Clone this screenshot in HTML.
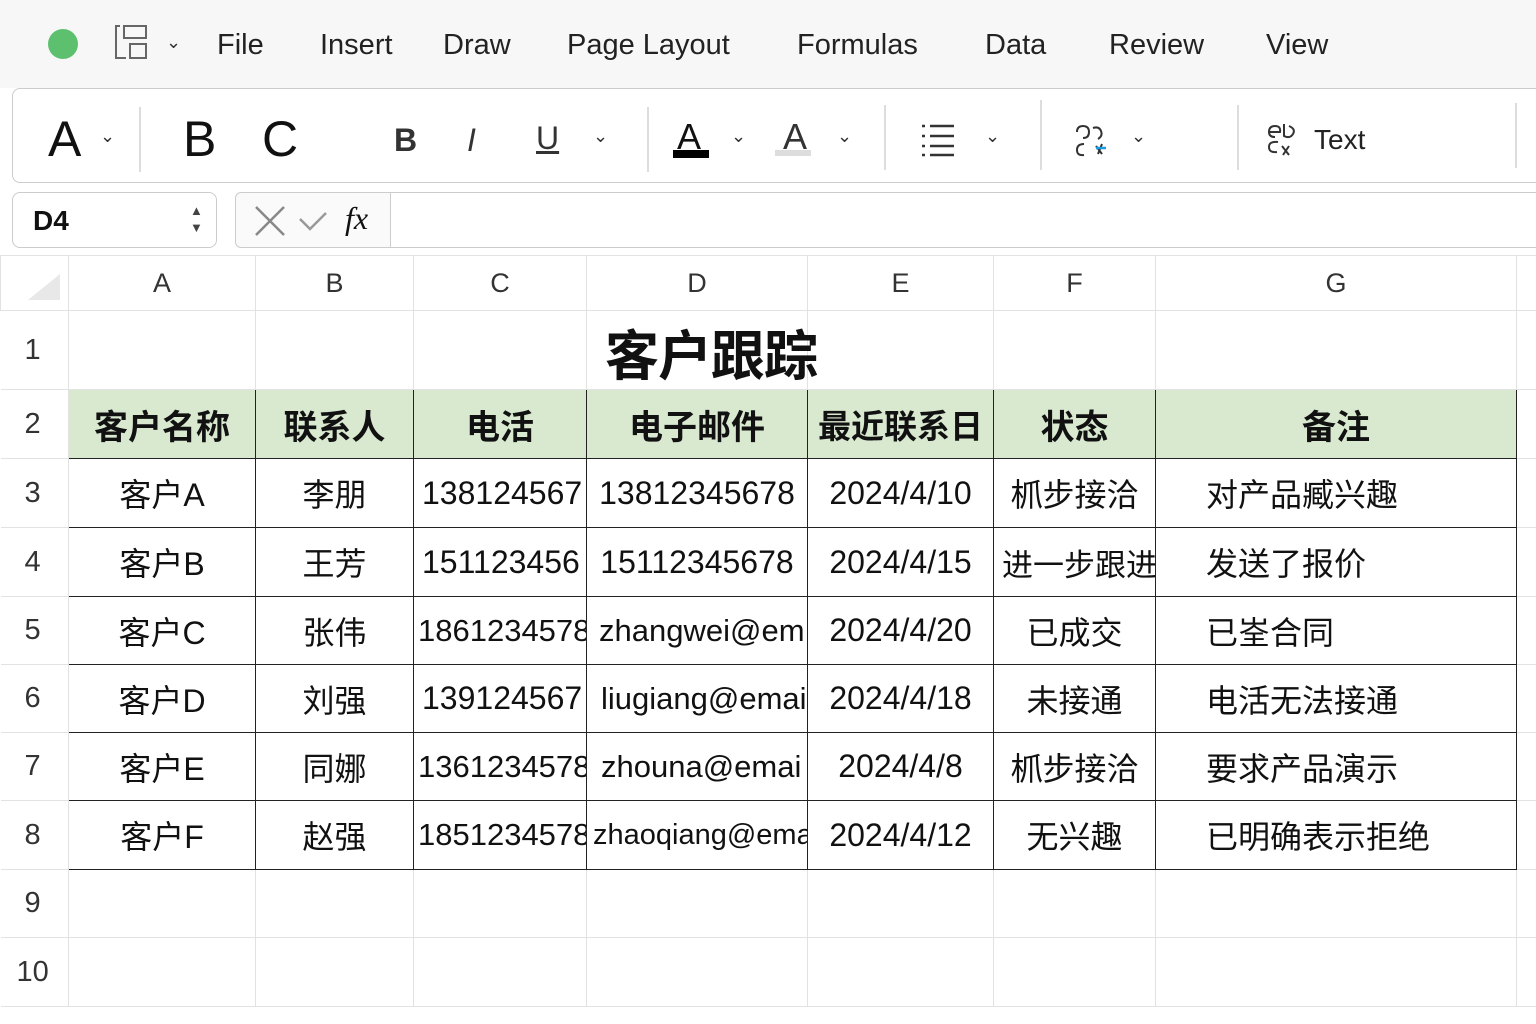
<!DOCTYPE html>
<html><head><meta charset="utf-8"><style>
*{margin:0;padding:0;box-sizing:border-box}
body{width:1536px;height:1024px;background:#fff;position:relative;overflow:hidden;font-family:"Liberation Sans","Noto Sans CJK SC",sans-serif;color:#111}
.a{position:absolute}
.menu{font-size:29px;color:#222;top:29px}
.tb{left:12px;top:88px;width:1540px;height:95px;border:1.5px solid #ccc;border-radius:8px;background:#fff}
.chev{font-size:18px;color:#333}
.sep{width:1.5px;background:#ddd}
table{position:absolute;left:0;top:255px;width:1536px;border-collapse:collapse;table-layout:fixed}
td{border:1px solid #e2e2e2;text-align:center;font-size:32px;white-space:nowrap;overflow:hidden;padding:0}
.ch td{font-size:27px;color:#333;background:#fff}
td.rh{font-size:29px;color:#333;text-align:left;padding-left:24px;border-left:none}
.d td:not(.rh):not(.e){border:1.5px solid #222}
.h td:not(.rh):not(.e){background:#d8e9d0;font-weight:bold;border:1.5px solid #222;font-size:34px}
.l{text-align:left!important}
</style></head><body>
<div class="a" style="left:0;top:0;width:1536px;height:88px;background:#f7f7f7"></div>
<div class="a" style="left:48px;top:29px;width:30px;height:30px;border-radius:50%;background:#5cc06e"></div>
<svg class="a" style="left:112px;top:24px" width="40" height="38" viewBox="0 0 40 38"><path d="M8 2h-4v32h10M12 2h22v12h-22z M18 20h16v14h-16z" fill="none" stroke="#666" stroke-width="2"/></svg>
<div class="a chev" style="left:166px;top:32px">⌄</div>
<div class="a menu" style="left:217px">File</div>
<div class="a menu" style="left:320px">Insert</div>
<div class="a menu" style="left:443px">Draw</div>
<div class="a menu" style="left:567px">Page Layout</div>
<div class="a menu" style="left:797px">Formulas</div>
<div class="a menu" style="left:985px">Data</div>
<div class="a menu" style="left:1109px">Review</div>
<div class="a menu" style="left:1266px">View</div>
<div class="a tb"></div>
<div class="a" style="left:48px;top:110px;font-size:50px;font-weight:300">A</div>
<div class="a chev" style="left:100px;top:126px">⌄</div>
<div class="a sep" style="left:139px;top:107px;height:65px"></div>
<div class="a" style="left:183px;top:110px;font-size:50px">B</div>
<div class="a" style="left:262px;top:110px;font-size:50px">C</div>
<div class="a" style="left:394px;top:122px;font-size:32px;font-weight:bold;color:#333">B</div>
<div class="a" style="left:467px;top:122px;font-size:32px;font-style:italic;color:#333">I</div>
<div class="a" style="left:536px;top:120px;font-size:32px;color:#333;text-decoration:underline">U</div>
<div class="a chev" style="left:593px;top:126px">⌄</div>
<div class="a sep" style="left:647px;top:107px;height:65px"></div>
<div class="a" style="left:677px;top:116px;font-size:36px">A</div>
<div class="a" style="left:673px;top:150px;width:36px;height:8px;background:#000"></div>
<div class="a chev" style="left:731px;top:126px">⌄</div>
<div class="a" style="left:783px;top:116px;font-size:36px;color:#333">A</div>
<div class="a" style="left:775px;top:150px;width:36px;height:6px;background:#ddd"></div>
<div class="a chev" style="left:837px;top:126px">⌄</div>
<div class="a sep" style="left:884px;top:105px;height:65px"></div>
<svg class="a" style="left:920px;top:122px" width="36" height="36"><g stroke="#333" stroke-width="2.5"><path d="M10 4h24M10 14h24M10 24h24M10 33h24"/><path d="M2 4h3M2 14h3M2 24h3M2 33h3"/></g></svg>
<div class="a chev" style="left:985px;top:126px">⌄</div>
<div class="a sep" style="left:1040px;top:100px;height:70px"></div>
<svg class="a" style="left:1074px;top:124px" width="36" height="34"><path d="M3 8q0-6 6-6t6 6-6 6M19 4q6-2 8 3t-3 8M10 20q-7 0-7 6t7 5M22 22l6 8M28 20l-4 10" fill="none" stroke="#333" stroke-width="2"/><path d="M22 24h10" stroke="#1a9de0" stroke-width="2.5"/></svg>
<div class="a chev" style="left:1131px;top:126px">⌄</div>
<div class="a sep" style="left:1237px;top:105px;height:65px"></div>
<svg class="a" style="left:1266px;top:124px" width="32" height="32"><path d="M3 8q0-6 6-6t5 6h-11q0 5 6 5M18 0v12q6 3 9-2t-4-8" fill="none" stroke="#333" stroke-width="2"/><path d="M12 18q-9-1-9 5t8 5M16 22l7 9M23 22l-6 9" fill="none" stroke="#333" stroke-width="2"/></svg>
<div class="a" style="left:1314px;top:124px;font-size:28px;color:#222">Text</div>
<div class="a sep" style="left:1515px;top:103px;height:65px"></div>
<div class="a" style="left:12px;top:192px;width:205px;height:56px;border:1.5px solid #ccc;border-radius:8px"></div>
<div class="a" style="left:33px;top:205px;font-size:28px;font-weight:bold">D4</div>
<div class="a" style="left:190px;top:202px;font-size:13px;line-height:17px;color:#444">▲<br>▼</div>
<div class="a" style="left:235px;top:192px;width:156px;height:56px;border:1.5px solid #ccc;border-radius:6px 0 0 6px;background:#fafafa"></div>
<svg class="a" style="left:254px;top:205px" width="80" height="32"><path d="M2 2l28 28M30 2l-28 28" stroke="#888" stroke-width="2.5"/><path d="M46 14l10 10 16-16" stroke="#999" stroke-width="2.5" fill="none"/></svg>
<div class="a" style="left:345px;top:200px;font-size:32px;font-style:italic;font-family:'Liberation Serif',serif">fx</div>
<div class="a" style="left:391px;top:192px;width:1150px;height:56px;border-top:1.5px solid #ccc;border-bottom:1.5px solid #ccc"></div>
<table>
<colgroup><col style="width:68px"><col style="width:187px"><col style="width:158px"><col style="width:173px"><col style="width:221px"><col style="width:186px"><col style="width:162px"><col style="width:361px"><col style="width:20px"></colgroup>
<tr class="ch" style="height:55px"><td style="position:relative"><svg width="36" height="30" style="position:absolute;left:25px;top:16px"><path d="M34 2v26h-32z" fill="#e8e8e8"/></svg></td><td>A</td><td>B</td><td>C</td><td>D</td><td>E</td><td>F</td><td>G</td><td></td></tr>
<tr style="height:79px"><td class="rh">1</td><td></td><td></td><td></td><td></td><td></td><td></td><td></td><td></td></tr>
<tr class="h" style="height:69px"><td class="rh">2</td><td>客户名称</td><td>联系人</td><td>电活</td><td>电子邮件</td><td style="font-size:33px">最近联系日</td><td>状态</td><td>备注</td><td class="e"></td></tr>
<tr class="d" style="height:69px"><td class="rh">3</td><td>客户A</td><td>李朋</td><td class="l" style="padding-left:8px">138124567</td><td>13812345678</td><td>2024/4/10</td><td>枛步接洽</td><td class="l" style="padding-left:50px">对产品臧兴趣</td><td class="e"></td></tr>
<tr class="d" style="height:69px"><td class="rh">4</td><td>客户B</td><td>王芳</td><td class="l" style="padding-left:8px">151123456</td><td>15112345678</td><td>2024/4/15</td><td class="l" style="padding-left:8px;font-size:31px">进一步跟进</td><td class="l" style="padding-left:50px">发送了报价</td><td class="e"></td></tr>
<tr class="d" style="height:68px"><td class="rh">5</td><td>客户C</td><td>张伟</td><td class="l" style="padding-left:4px;font-size:31px">1861234578</td><td class="l" style="padding-left:12px;font-size:31px">zhangwei@em</td><td>2024/4/20</td><td>已成交</td><td class="l" style="padding-left:50px">已峑合同</td><td class="e"></td></tr>
<tr class="d" style="height:68px"><td class="rh">6</td><td>客户D</td><td>刘强</td><td class="l" style="padding-left:8px">139124567</td><td class="l" style="padding-left:14px;font-size:31px">liugiang@emai</td><td>2024/4/18</td><td>未接通</td><td class="l" style="padding-left:50px">电活无法接通</td><td class="e"></td></tr>
<tr class="d" style="height:68px"><td class="rh">7</td><td>客户E</td><td>同娜</td><td class="l" style="padding-left:4px;font-size:31px">1361234578</td><td class="l" style="padding-left:14px;font-size:31px">zhouna@emai</td><td>2024/4/8</td><td>枛步接洽</td><td class="l" style="padding-left:50px">要求产品演示</td><td class="e"></td></tr>
<tr class="d" style="height:69px"><td class="rh">8</td><td>客户F</td><td>赵强</td><td class="l" style="padding-left:4px;font-size:31px">1851234578</td><td class="l" style="padding-left:6px;font-size:29px">zhaoqiang@emai</td><td>2024/4/12</td><td>无兴趣</td><td class="l" style="padding-left:50px">已明确表示拒绝</td><td class="e"></td></tr>
<tr style="height:68px"><td class="rh">9</td><td></td><td></td><td></td><td></td><td></td><td></td><td></td><td></td></tr>
<tr style="height:69px"><td class="rh" style="padding-left:16px">10</td><td></td><td></td><td></td><td></td><td></td><td></td><td></td><td></td></tr>
</table>
<div class="a" style="left:605px;top:312px;font-size:54px;font-weight:bold;letter-spacing:-1px">客户跟踪</div>
</body></html>
